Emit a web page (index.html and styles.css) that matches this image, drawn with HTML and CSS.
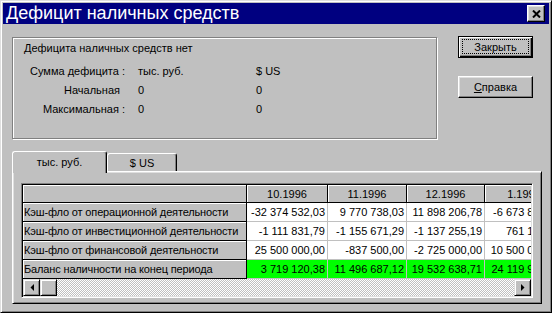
FILE: index.html
```html
<!DOCTYPE html>
<html lang="ru">
<head>
    <meta charset="UTF-8">
    <title>Дефицит наличных средств</title>
    <link rel="stylesheet" href="styles.css">
</head>
<body>

<div class="window">
    <div class="titlebar">
        <span class="title">Дефицит наличных средств</span>
        <button class="close-btn" title="Закрыть">
            <svg width="9" height="8" viewBox="0 0 9 8"><path d="M1 0.5L8 7.5M8 0.5L1 7.5" stroke="#000" stroke-width="2"/></svg>
        </button>
    </div>

    <div class="content">
        <div class="top">
            <div class="groupbox">
                <div class="status">Дефицита наличных средств нет</div>
                <div class="summary">
                    <span class="lbl">Сумма дефицита :</span><span>тыс. руб.</span><span>$ US</span>
                    <span class="lbl short">Начальная</span><span>0</span><span>0</span>
                    <span class="lbl">Максимальная :</span><span>0</span><span>0</span>
                </div>
            </div>
            <div class="buttons">
                <button class="btn default"><span class="focus">Закрыть</span></button>
                <button class="btn"><span><u>С</u>правка</span></button>
            </div>
        </div>

        <div class="tabs">
            <div class="tab active">тыс. руб.</div>
            <div class="tab">$ US</div>
        </div>

        <div class="panel">
            <div class="grid">
                <div class="sheet">
                    <div class="cells">
                        <div class="c fx"></div>
                        <div class="c fx hd">10.1996</div>
                        <div class="c fx hd">11.1996</div>
                        <div class="c fx hd">12.1996</div>
                        <div class="c fx hd">1.1997</div>

                        <div class="c fx name">Кэш-фло от операционной деятельности</div>
                        <div class="c">-32 374 532,03</div>
                        <div class="c">9 770 738,03</div>
                        <div class="c">11 898 206,78</div>
                        <div class="c">-6 673 812,40</div>

                        <div class="c fx name">Кэш-фло от инвестиционной деятельности</div>
                        <div class="c">-1 111 831,79</div>
                        <div class="c">-1 155 671,29</div>
                        <div class="c">-1 137 255,19</div>
                        <div class="c">761 150,00</div>

                        <div class="c fx name">Кэш-фло от финансовой деятельности</div>
                        <div class="c">25 500 000,00</div>
                        <div class="c">-837 500,00</div>
                        <div class="c">-2 725 000,00</div>
                        <div class="c">10 500 000,00</div>

                        <div class="c fx name">Баланс наличности на конец периода</div>
                        <div class="c ok">3 719 120,38</div>
                        <div class="c ok">11 496 687,12</div>
                        <div class="c ok">19 532 638,71</div>
                        <div class="c ok">24 119 976,31</div>
                    </div>
                </div>
                <div class="hscroll">
                    <div class="sb-btn">
                        <svg width="4" height="7" viewBox="0 0 4 7"><path d="M4 0V7L0.5 3.5Z"/></svg>
                    </div>
                    <div class="sb-btn"></div>
                    <div class="track"></div>
                    <div class="sb-btn">
                        <svg width="4" height="7" viewBox="0 0 4 7"><path d="M0 0V7L3.5 3.5Z"/></svg>
                    </div>
                </div>
            </div>
        </div>
    </div>
</div>

</body>
</html>
```

FILE: styles.css
```css
* {
    box-sizing: border-box;
}

body {
    margin: 0;
    background-color: #c0c0c0;
    font-family: "Liberation Sans", Arial, sans-serif;
    font-size: 11px;
    color: #000;
}

/* window frame */
.window {
    width: 552px;
    height: 313px;
    padding: 2px;
    border: 1px solid;
    border-color: #dfdfdf #000 #000 #dfdfdf;
    box-shadow: inset 1px 1px #fff, inset -1px -1px #808080;
    background-color: #c0c0c0;
}

.titlebar {
    height: 21px;
    display: flex;
    align-items: center;
    justify-content: space-between;
    padding: 0 4px 0 3px;
    background-color: #000080;
    color: #fff;
}

.title {
    font-size: 18px;
    line-height: 21px;
}

.close-btn {
    width: 18px;
    height: 17px;
    padding: 0;
    display: flex;
    align-items: center;
    justify-content: center;
    background-color: #c0c0c0;
    border: 1px solid;
    border-color: #fff #000 #000 #fff;
    box-shadow: inset -1px -1px #808080, inset 1px 1px #dfdfdf;
}

.content {
    padding: 12px 0 0 9px;
}

/* top part */
.top {
    display: flex;
    align-items: flex-start;
}

.groupbox {
    width: 425px;
    height: 102px;
    margin-top: 1px;
    padding: 4px 0 0 11px;
    border: 1px solid #808080;
    box-shadow: inset 1px 1px #fff, 1px 1px #fff;
}

.status {
    line-height: 13px;
}

.summary {
    display: grid;
    grid-template-columns: 101px 105px auto;
    grid-auto-rows: 19px;
    column-gap: 13px;
    align-items: center;
    margin-top: 6px;
}

.lbl {
    text-align: right;
}

.lbl.short {
    padding-right: 5px;
}

.buttons {
    margin-left: 21px;
    display: flex;
    flex-direction: column;
    gap: 18px;
}

.btn {
    width: 75px;
    height: 22px;
    padding: 0;
    display: flex;
    align-items: center;
    justify-content: center;
    font-family: inherit;
    font-size: 11px;
    color: #000;
    background-color: #c0c0c0;
    border: 1px solid;
    border-color: #fff #000 #000 #fff;
    box-shadow: inset -1px -1px #808080, inset 1px 1px #dfdfdf;
}

.btn.default {
    padding: 2px 3px 3px 3px;
    border-color: #000;
    box-shadow: inset 1px 1px #fff, inset -1px -1px #000, inset -2px -2px #808080;
}

.btn .focus {
    flex: 1;
    align-self: stretch;
    display: flex;
    align-items: center;
    justify-content: center;
    border: 1px dotted #000;
}

/* tabs */
.tabs {
    display: flex;
    align-items: flex-end;
    height: 20px;
    margin-top: 12px;
    position: relative;
    z-index: 1;
}

.tab {
    height: 18px;
    display: flex;
    align-items: center;
    justify-content: center;
    background-color: #c0c0c0;
    border-top: 1px solid #fff;
    border-left: 1px solid #fff;
    border-right: 1px solid #000;
    border-radius: 3px 3px 0 0;
    box-shadow: inset -1px 0 #808080;
}

.tab.active {
    width: 95px;
    height: 22px;
    margin-bottom: -2px;
    padding-bottom: 2px;
}

.tab:not(.active) {
    width: 70px;
}

/* panel with the grid */
.panel {
    width: 530px;
    height: 133px;
    padding: 11px 6px 3px 8px;
    border: 1px solid;
    border-color: #fff #000 #000 #fff;
    box-shadow: inset 1px 1px #dfdfdf, inset -1px -1px #808080;
}

.grid {
    width: 512px;
    height: 115px;
    padding: 1px;
    overflow: hidden;
    border: 1px solid;
    border-color: #808080 #fff #fff #808080;
    box-shadow: inset 1px 1px #000, inset -1px -1px #dfdfdf;
}

.sheet {
    height: 94px;
    overflow: hidden;
}

.cells {
    display: grid;
    grid-template-columns: 224px 81px 79px 78px 79px;
    grid-template-rows: 18px repeat(4, 19px);
    width: 541px;
}

.c {
    display: flex;
    align-items: center;
    justify-content: flex-end;
    padding: 0 2px;
    white-space: nowrap;
    overflow: hidden;
    background-color: #fff;
    border-right: 1px solid #c0c0c0;
    border-bottom: 1px solid #c0c0c0;
}

.c.fx {
    background-color: #c0c0c0;
    border-color: #000;
    box-shadow: inset 1px 1px #fff;
}

.c.hd {
    justify-content: center;
}

.c.name {
    justify-content: flex-start;
    padding-left: 1px;
    letter-spacing: -0.15px;
}

.c.ok {
    background-color: #00ff00;
}

/* horizontal scroll bar */
.hscroll {
    display: flex;
    height: 17px;
    background-image: repeating-conic-gradient(#c0c0c0 0 25%, #fff 0 50%);
    background-size: 2px 2px;
}

.sb-btn {
    width: 17px;
    height: 17px;
    display: flex;
    align-items: center;
    justify-content: center;
    background-color: #c0c0c0;
    border: 1px solid;
    border-color: #dfdfdf #000 #000 #dfdfdf;
    box-shadow: inset 1px 1px #fff, inset -1px -1px #808080;
}

.track {
    flex: 1;
}
```
